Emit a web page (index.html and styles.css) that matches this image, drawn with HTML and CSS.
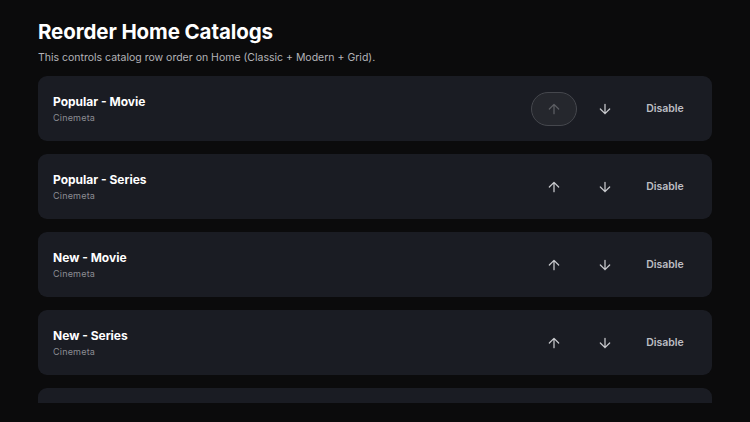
FILE: index.html
```html
<!DOCTYPE html>
<html>
<head>
<meta charset="utf-8">
<link rel="stylesheet" href="styles.css">
</head>
<body>
<div class="page">
  <h1 class="title">Reorder Home Catalogs</h1>
  <p class="subtitle">This controls catalog row order on Home (Classic + Modern + Grid).</p>
  <div class="list">
    <div class="card">
      <div class="info"><div class="name">Popular - Movie</div><div class="source">Cinemeta</div></div>
      <div class="actions">
        <button class="icon-btn focused disabled"><svg viewBox="0 0 24 24"><path d="M12 19V5M5 12l7-7 7 7"/></svg></button>
        <button class="icon-btn"><svg viewBox="0 0 24 24"><path d="M12 5v14M5 12l7 7 7-7"/></svg></button>
        <button class="text-btn">Disable</button>
      </div>
    </div>
    <div class="card">
      <div class="info"><div class="name">Popular - Series</div><div class="source">Cinemeta</div></div>
      <div class="actions">
        <button class="icon-btn"><svg viewBox="0 0 24 24"><path d="M12 19V5M5 12l7-7 7 7"/></svg></button>
        <button class="icon-btn"><svg viewBox="0 0 24 24"><path d="M12 5v14M5 12l7 7 7-7"/></svg></button>
        <button class="text-btn">Disable</button>
      </div>
    </div>
    <div class="card">
      <div class="info"><div class="name">New - Movie</div><div class="source">Cinemeta</div></div>
      <div class="actions">
        <button class="icon-btn"><svg viewBox="0 0 24 24"><path d="M12 19V5M5 12l7-7 7 7"/></svg></button>
        <button class="icon-btn"><svg viewBox="0 0 24 24"><path d="M12 5v14M5 12l7 7 7-7"/></svg></button>
        <button class="text-btn">Disable</button>
      </div>
    </div>
    <div class="card">
      <div class="info"><div class="name">New - Series</div><div class="source">Cinemeta</div></div>
      <div class="actions">
        <button class="icon-btn"><svg viewBox="0 0 24 24"><path d="M12 19V5M5 12l7-7 7 7"/></svg></button>
        <button class="icon-btn"><svg viewBox="0 0 24 24"><path d="M12 5v14M5 12l7 7 7-7"/></svg></button>
        <button class="text-btn">Disable</button>
      </div>
    </div>
    <div class="card"></div>
  </div>
</div>
</body>
</html>
```
FILE: styles.css
```css
html, body {
  margin: 0;
  padding: 0;
  background: #0b0b0c;
  font-family: Inter, "Noto Sans", sans-serif;
  color: #ffffff;
}
.page {
  width: 750px;
  height: 422px;
  box-sizing: border-box;
  padding: 18px 38px 0 38px;
  overflow: hidden;
}
.title {
  margin: 0;
  font-size: 20.5px;
  font-weight: 700;
  line-height: 28px;
  letter-spacing: -0.1px;
}
.subtitle {
  margin: 5px 0 0 0;
  font-size: 10.5px;
  line-height: 14px;
  color: #b4b4b8;
}
.list {
  margin-top: 11px;
  height: 327px;
  overflow: hidden;
  display: flex;
  flex-direction: column;
  gap: 13px;
}
.card {
  flex: 0 0 auto;
  height: 65px;
  box-sizing: border-box;
  background: #1a1c23;
  border-radius: 9px;
  display: flex;
  align-items: center;
  justify-content: space-between;
  padding: 0 15px;
}
.info {
  display: flex;
  flex-direction: column;
  gap: 3px;
}
.name {
  font-size: 12px;
  font-weight: 700;
  line-height: 15px;
  color: #ffffff;
}
.source {
  font-size: 9px;
  line-height: 11px;
  letter-spacing: 0.2px;
  color: #8c8d93;
}
.actions {
  display: flex;
  align-items: center;
  gap: 5px;
}
.icon-btn {
  width: 46px;
  height: 34px;
  border-radius: 17px;
  border: 1px solid transparent;
  background: transparent;
  display: flex;
  align-items: center;
  justify-content: center;
  padding: 0;
}
.icon-btn svg {
  width: 16px;
  height: 16px;
  fill: none;
  stroke: #c8c9cd;
  stroke-width: 1.9;
  stroke-linecap: round;
  stroke-linejoin: round;
}
.icon-btn.focused {
  border-color: #45474d;
  background: #25272d;
}
.icon-btn.disabled svg {
  stroke: #5c5e63;
}
.text-btn {
  width: 64px;
  height: 34px;
  background: transparent;
  border: none;
  color: #bdbec3;
  font-family: Inter, "Noto Sans", sans-serif;
  font-size: 10.5px;
  font-weight: 600;
  padding: 0;
}
```
